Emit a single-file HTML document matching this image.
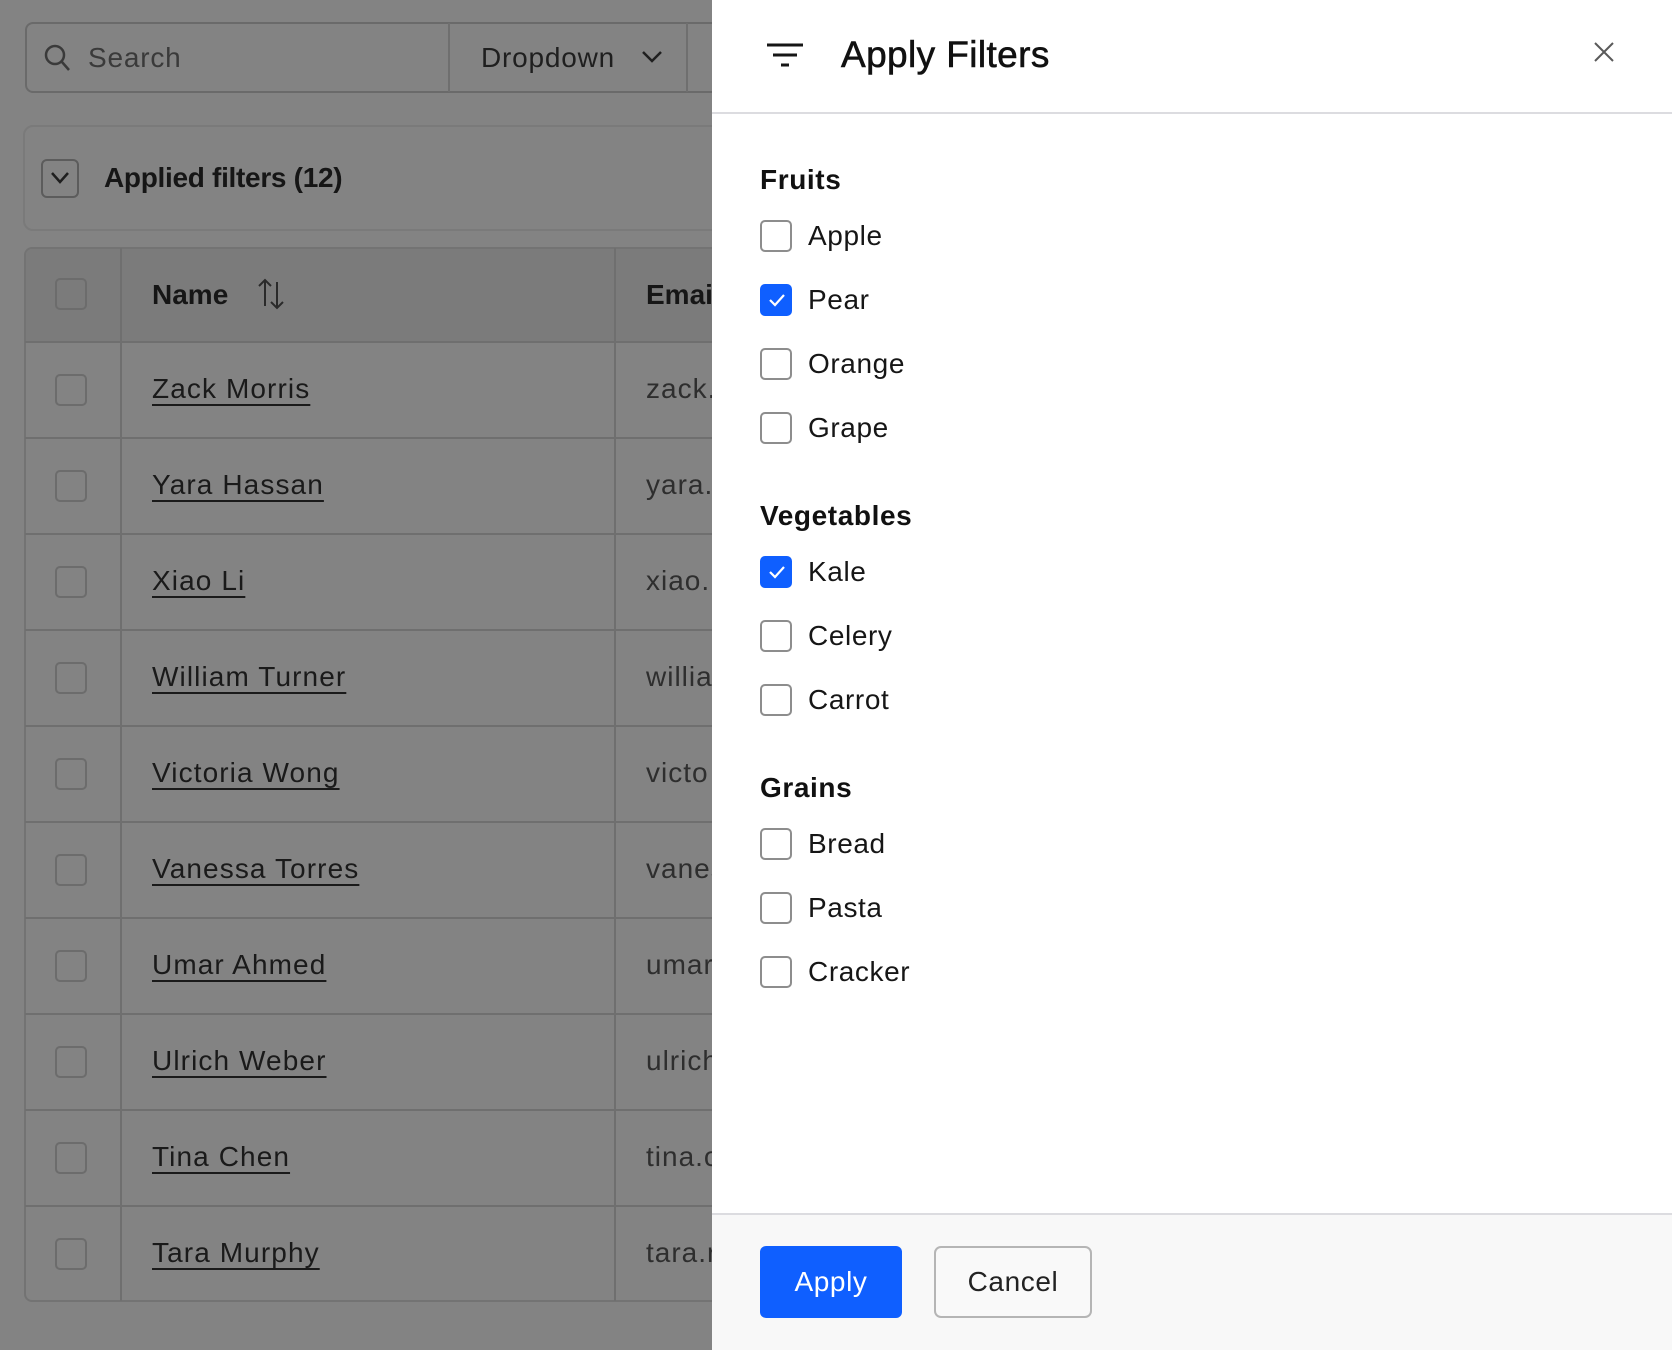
<!DOCTYPE html>
<html><head><meta charset="utf-8"><style>
*{box-sizing:border-box;margin:0;padding:0}
body{width:1672px;height:1350px;overflow:hidden;background:#838383;font-family:"Liberation Sans",sans-serif;position:relative;color:#161616}
.a{position:absolute}
.l{background:#6f6f6f}
.cb{position:absolute;width:32px;height:32px;border:2px solid #6c6c6c;border-radius:5px}
.nm{position:absolute;left:152px;font-size:28px;color:#1a1a1a;text-decoration:underline;text-underline-offset:6px;text-decoration-thickness:2px;letter-spacing:1.1px}
.em{position:absolute;left:646px;font-size:28px;color:#2e2e2e;letter-spacing:1px}
.panel{position:absolute;left:712px;top:0;width:960px;height:1350px;background:#fff}
.h{position:absolute;left:48px;font-size:28px;font-weight:bold;color:#111;letter-spacing:0.6px}
.pc{position:absolute;left:48px;width:32px;height:32px;border:2px solid #8d8d8d;border-radius:5px;background:#fff}
.pc.on{background:#0f5fff;border-color:#0f5fff}
.lb{position:absolute;left:96px;font-size:28px;color:#161616;letter-spacing:0.6px}
</style></head><body>
<div class="a" style="left:25px;top:22px;width:720px;height:71px;border:2px solid #6a6a6a;border-radius:8px"></div>
<div class="a l" style="left:448px;top:23px;width:2px;height:69px"></div>
<div class="a l" style="left:686px;top:23px;width:2px;height:69px"></div>
<svg class="a" style="left:42px;top:42px" width="30" height="32" viewBox="0 0 30 32"><circle cx="13" cy="13" r="9" fill="none" stroke="#3a3a3a" stroke-width="2.5"/><path d="M20 20l7 8" stroke="#3a3a3a" stroke-width="2.5"/></svg>
<div class="a" style="left:88px;top:42px;font-size:28px;color:#3a3a3a;letter-spacing:0.8px">Search</div>
<div class="a" style="left:481px;top:42px;font-size:28px;color:#1f1f1f;letter-spacing:0.8px">Dropdown</div>
<svg class="a" style="left:640px;top:48px" width="24" height="18"><path d="M3 4l9 9 9-9" fill="none" stroke="#1f1f1f" stroke-width="2.5"/></svg>
<div class="a" style="left:23px;top:125px;width:720px;height:106px;border:2px solid #7a7a7a;border-radius:10px"></div>
<div class="a" style="left:41px;top:159px;width:38px;height:39px;border:2px solid #5c5c5c;border-radius:6px"></div>
<svg class="a" style="left:48px;top:168px" width="24" height="20"><path d="M4 5l8 9 8-9" fill="none" stroke="#1f1f1f" stroke-width="2.5"/></svg>
<div class="a" style="left:104px;top:162px;font-size:28px;font-weight:bold;color:#161616;letter-spacing:-0.3px">Applied filters (12)</div>
<div class="a" style="left:24px;top:247px;width:720px;height:1055px;border:2px solid #737373;border-radius:8px;overflow:hidden">
<div class="a" style="left:0;top:0;width:720px;height:93px;background:#7b7b7b"></div>
</div>
<div class="a l" style="left:120px;top:248px;width:2px;height:1053px"></div>
<div class="a l" style="left:614px;top:248px;width:2px;height:1053px"></div>
<div class="cb" style="left:55px;top:278px"></div>
<div class="a" style="left:152px;top:279px;font-size:28px;font-weight:bold">Name</div>
<svg class="a" style="left:256px;top:276px" width="34" height="36"><path d="M9 30V4M3 10l6-6 6 6M21 6v26M15 26l6 6 6-6" fill="none" stroke="#2a2a2a" stroke-width="2"/></svg>
<div class="a" style="left:646px;top:279px;font-size:28px;font-weight:bold">Email</div>
<div id="rows"></div>
<script>
var n=["Zack Morris","Yara Hassan","Xiao Li","William Turner","Victoria Wong","Vanessa Torres","Umar Ahmed","Ulrich Weber","Tina Chen","Tara Murphy"],e=["zack.","yara.","xiao.l","willia","victo","vanes","umar.","ulrich","tina.c","tara.r"],h="";
for(var i=0;i<10;i++){var t=341+i*96;h+='<div class="a l" style="left:25px;top:'+t+'px;width:718px;height:2px"></div><div class="cb" style="left:55px;top:'+(t+33)+'px"></div><div class="nm" style="top:'+(t+32)+'px">'+n[i]+'</div><div class="em" style="top:'+(t+32)+'px">'+e[i]+'</div>';}
document.getElementById("rows").innerHTML=h;
</script>
<div class="panel">
<svg class="a" style="left:54px;top:42px" width="38" height="28"><path d="M1 3h36M7 13h24M15 23h8" stroke="#161616" stroke-width="3"/></svg>
<div class="a" style="left:129px;top:34px;font-size:37px;color:#111;letter-spacing:0.4px;-webkit-text-stroke:0.6px #111">Apply Filters</div>
<svg class="a" style="left:880px;top:40px" width="24" height="24"><path d="M3 3l18 18M21 3L3 21" stroke="#5a5a5a" stroke-width="2"/></svg>
<div class="a" style="left:0;top:112px;width:960px;height:2px;background:#dcdce0"></div>
<div class="h" style="top:164px">Fruits</div>
<div class="pc" style="top:220px"></div><div class="lb" style="top:220px">Apple</div>
<div class="pc on" style="top:284px"></div><div class="lb" style="top:284px">Pear</div>
<div class="pc" style="top:348px"></div><div class="lb" style="top:348px">Orange</div>
<div class="pc" style="top:412px"></div><div class="lb" style="top:412px">Grape</div>
<div class="h" style="top:500px">Vegetables</div>
<div class="pc on" style="top:556px"></div><div class="lb" style="top:556px">Kale</div>
<div class="pc" style="top:620px"></div><div class="lb" style="top:620px">Celery</div>
<div class="pc" style="top:684px"></div><div class="lb" style="top:684px">Carrot</div>
<div class="h" style="top:772px">Grains</div>
<div class="pc" style="top:828px"></div><div class="lb" style="top:828px">Bread</div>
<div class="pc" style="top:892px"></div><div class="lb" style="top:892px">Pasta</div>
<div class="pc" style="top:956px"></div><div class="lb" style="top:956px">Cracker</div>
<svg class="a" style="left:55px;top:292px" width="20" height="16"><path d="M3 8l5 5 9-10" fill="none" stroke="#fff" stroke-width="2.2"/></svg>
<svg class="a" style="left:55px;top:564px" width="20" height="16"><path d="M3 8l5 5 9-10" fill="none" stroke="#fff" stroke-width="2.2"/></svg>
<div class="a" style="left:0;top:1213px;width:960px;height:137px;background:#f8f8f8;border-top:2px solid #dcdce0"></div>
<div class="a" style="left:48px;top:1246px;width:142px;height:72px;background:#0f5fff;border-radius:6px;color:#fff;font-size:28px;text-align:center;line-height:72px;letter-spacing:0.6px">Apply</div>
<div class="a" style="left:222px;top:1246px;width:158px;height:72px;border:2px solid #b5b5b5;border-radius:7px;color:#222;font-size:28px;text-align:center;line-height:68px;background:#f9f9f9;letter-spacing:0.6px">Cancel</div>
</div>
</body></html>
